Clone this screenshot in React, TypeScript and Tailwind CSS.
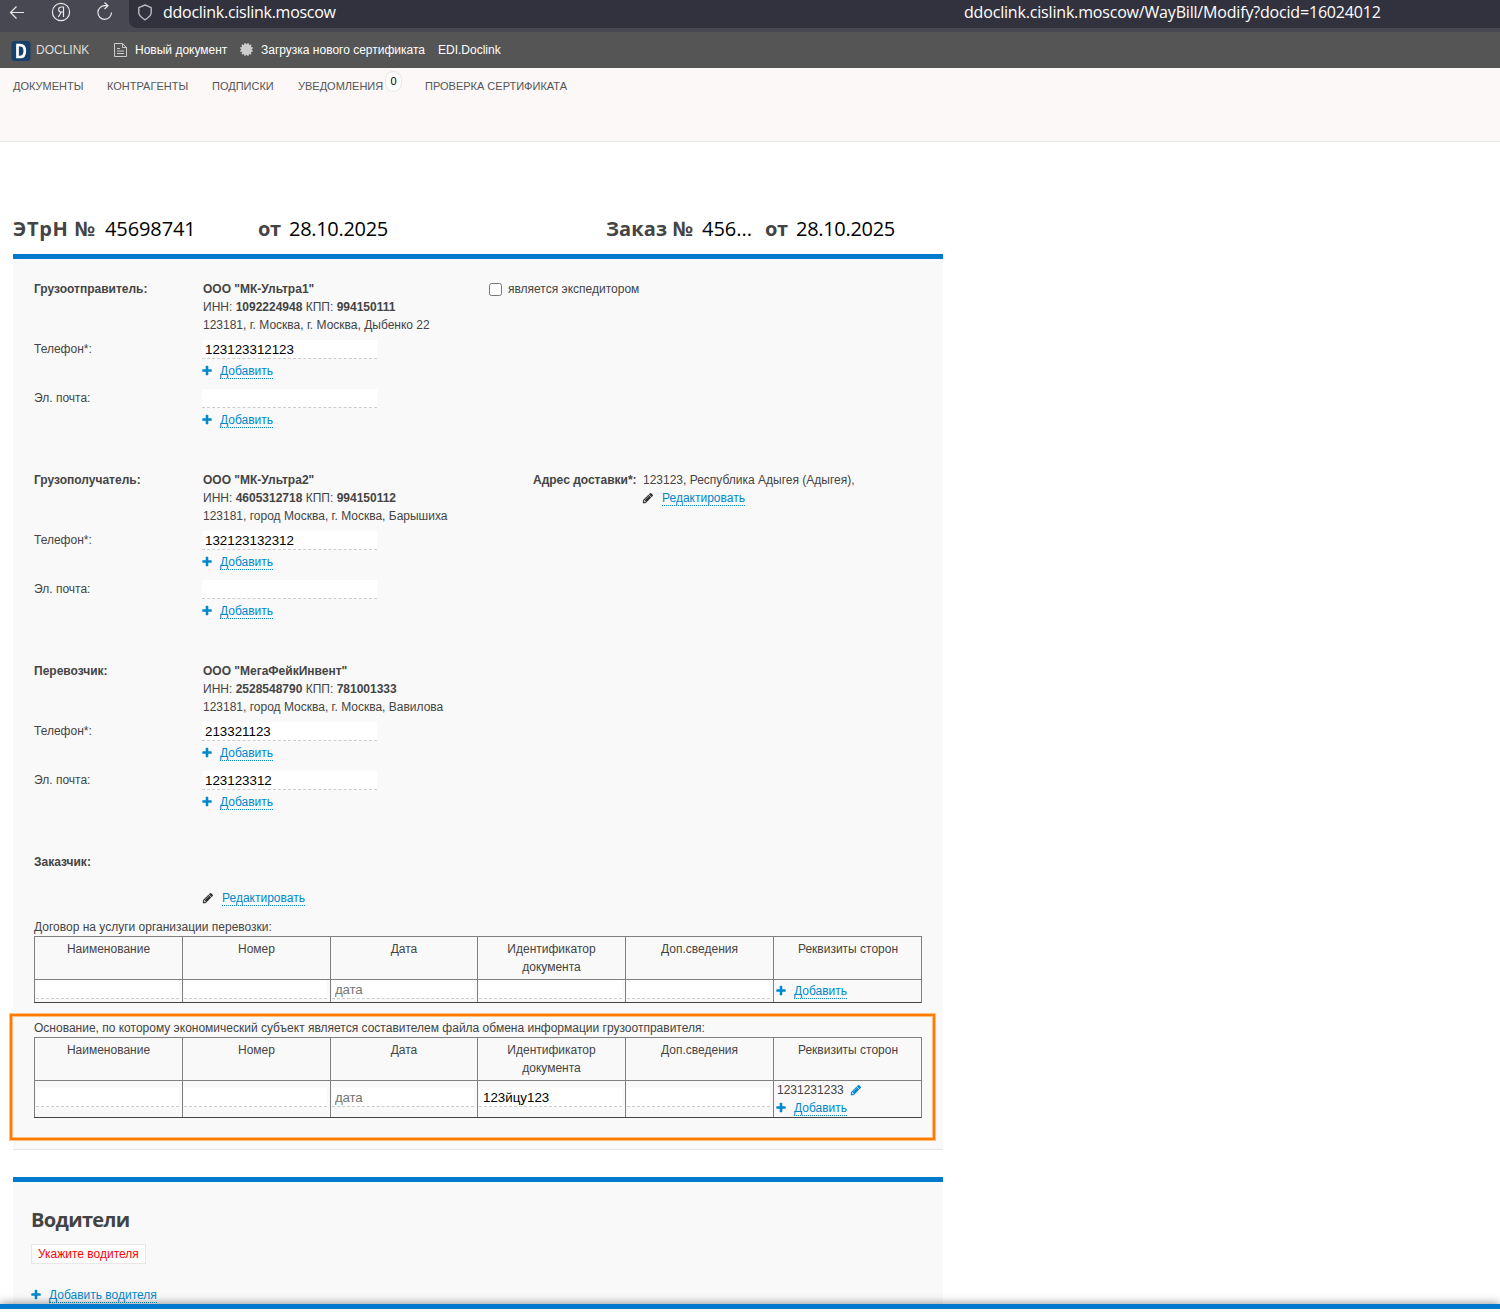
import type { ReactNode } from "react";
import { clsx } from "clsx";
import { FaCertificate } from "react-icons/fa";

type Party = {
  role: string;
  name: string;
  inn: string;
  kpp: string;
  address: string;
  phone: string;
  email: string;
  extra?: ReactNode;
};

const COLUMNS = [
  "Наименование",
  "Номер",
  "Дата",
  "Идентификатор документа",
  "Доп.сведения",
  "Реквизиты сторон"
];

const GRID = "grid grid-cols-[148px_148px_147px_148px_148px_149px]";

function PlusIcon() {
  return (
    <svg viewBox="0 0 1792 1792" fill="currentColor" className="mt-[3px] mr-[7px] -ml-px h-3 w-3 text-[#0088cc]">
      <path d="M1600 736v192q0 40-28 68t-68 28h-416v416q0 40-28 68t-68 28h-192q-40 0-68-28t-28-68v-416h-416q-40 0-68-28t-28-68v-192q0-40 28-68t68-28h416v-416q0-40 28-68t68-28h192q40 0 68 28t28 68v416h416q40 0 68 28t28 68z" />
    </svg>
  );
}

function PencilIcon({ className }: { className?: string }) {
  return (
    <svg viewBox="0 0 1792 1792" fill="currentColor" className={clsx("mt-[3px] h-3 w-3", className)}>
      <path d="M491 1536l91-91-235-235-91 91v107h128v128h107zm523-928q0-22-22-22-10 0-17 7l-542 542q-7 7-7 17 0 22 22 22 10 0 17-7l542-542q7-7 7-17zm-54-192l416 416-832 832h-416v-416zm683 96q0 53-37 90l-166 166-416-416 166-165q36-38 90-38 53 0 91 38l235 234q37 39 37 91z" />
    </svg>
  );
}

function DottedLink({ children }: { children: ReactNode }) {
  return (
    <a href="#" className="inline-block h-[17px] border-b border-dotted border-[#0088cc] leading-[18px] text-[#0088cc]">
      {children}
    </a>
  );
}

function AddLink({ label = "Добавить" }: { label?: string }) {
  return (
    <div className="flex h-[18px] items-start">
      <PlusIcon />
      <DottedLink>{label}</DottedLink>
    </div>
  );
}

function EditLink() {
  return (
    <div className="flex h-[18px] items-start">
      <PencilIcon className="mr-2 -ml-px text-[#333]" />
      <DottedLink>Редактировать</DottedLink>
    </div>
  );
}

function Field({ value, placeholder, className }: { value?: string; placeholder?: string; className?: string }) {
  return (
    <input
      defaultValue={value}
      placeholder={placeholder}
      className={clsx(
        "block h-[19px] border-b border-dashed border-[#ccc] bg-white text-[13.33px] leading-[18px] text-black outline-none placeholder:text-[#757575]",
        className
      )}
    />
  );
}

function PartyBlock({ party }: { party: Party }) {
  return (
    <section className="flex h-[191px]">
      <div className="w-[168px] shrink-0">
        <p className="h-[60px] font-bold">{party.role}:</p>
        <p className="h-[49px]">Телефон*:</p>
        <p>Эл. почта:</p>
      </div>
      <div className="w-[287px] shrink-0">
        <div className="h-[60px] pl-px whitespace-nowrap">
          <p className="font-bold">{party.name}</p>
          <p>
            ИНН: <b>{party.inn}</b> КПП: <b>{party.kpp}</b>
          </p>
          <p>{party.address}</p>
        </div>
        <div className="h-[49px]">
          <Field value={party.phone} className="mb-[3px] w-[175px] pl-[3px]" />
          <AddLink />
        </div>
        <Field value={party.email} className="mb-[3px] w-[175px] pl-[3px]" />
        <AddLink />
      </div>
      {party.extra}
    </section>
  );
}

function ContractTable({ docId, tall, children }: { docId?: string; tall?: boolean; children: ReactNode }) {
  const cell = clsx("border-l border-[#808080] pl-px", tall ? "pt-[7px]" : "pt-0");
  return (
    <div className="w-[888px] border-t border-r border-b border-t-[#808080] border-r-[#808080] border-b-[#444]">
      <div className={clsx(GRID, "h-[43px] border-b border-[#808080] text-center")}>
        {COLUMNS.map((title) => (
          <div key={title} className="border-l border-[#808080] px-5 pt-[3px] first:px-2 last:px-2">
            {title}
          </div>
        ))}
      </div>
      <div className={clsx(GRID, tall ? "h-[36px]" : "h-[22px]")}>
        <div className={cell}><Field className="w-[143px]" /></div>
        <div className={cell}><Field className="w-[143px]" /></div>
        <div className={cell}><Field placeholder="дата" className="w-[142px] pl-[3px] tracking-[-0.2px]" /></div>
        <div className={cell}><Field value={docId} className="w-[143px] pl-1" /></div>
        <div className={cell}><Field className="w-[143px]" /></div>
        <div className="border-l border-[#808080] pl-[2px]">{children}</div>
      </div>
    </div>
  );
}

const PARTIES: Party[] = [
  {
    role: "Грузоотправитель",
    name: 'ООО "МК-Ультра1"',
    inn: "1092224948",
    kpp: "994150111",
    address: "123181, г. Москва, г. Москва, Дыбенко 22",
    phone: "123123312123",
    email: "",
    extra: (
      <label className="flex h-[18px] items-start">
        <input
          type="checkbox"
          className="mt-[3px] mr-[6px] h-[13px] w-[13px] appearance-none rounded-[2.5px] border border-[#767676] bg-white"
        />
        является экспедитором
      </label>
    )
  },
  {
    role: "Грузополучатель",
    name: 'ООО "МК-Ультра2"',
    inn: "4605312718",
    kpp: "994150112",
    address: "123181, город Москва, г. Москва, Барышиха",
    phone: "132123132312",
    email: "",
    extra: (
      <div className="flex pl-11 whitespace-nowrap">
        <b className="w-[110px]">Адрес доставки*:</b>
        <div>
          <p>123123, Республика Адыгея (Адыгея),</p>
          <EditLink />
        </div>
      </div>
    )
  },
  {
    role: "Перевозчик",
    name: 'ООО "МегаФейкИнвент"',
    inn: "2528548790",
    kpp: "781001333",
    address: "123181, город Москва, г. Москва, Вавилова",
    phone: "213321123",
    email: "123123312"
  }
];

function BrowserBar() {
  return (
    <div className="flex h-8 bg-[#484852] font-['Open_Sans','Noto_Sans',sans-serif] text-base text-white">
      <div className="flex w-[129px] items-start">
        <svg width="129" height="28" fill="none" stroke="#e8e8ea" strokeWidth="1.2">
          <path d="M24 12.5H10.5M16.5 6.5l-6 6 6 6" />
          <circle cx="61" cy="12" r="8.6" />
          <path d="M63.5 17V7h-2.300c-3.400 0-3.400 5 0 5h2.300M61.300 12l-3 5" />
          <path d="M111.500 12.500a6.800 6.800 0 1 1-6.600-6.800h2.600M104.500 2.500l3.500 3.200-3.500 3.300" />
        </svg>
      </div>
      <div className="flex h-7 flex-1 rounded-bl-lg bg-[#32323e] leading-[25px]">
        <svg width="34" height="25" fill="none" stroke="#b9b9be" strokeWidth="1.4">
          <path d="M16 5l6.200 2.600v5.200c0 3-3 5-6.200 7-3.200-2-6.200-4-6.200-7V7.600z" strokeLinejoin="round" />
        </svg>
        <span className="w-[801px] tracking-[-0.27px]">ddoclink.cislink.moscow</span>
        <span className="tracking-[-0.18px]">ddoclink.cislink.moscow/WayBill/Modify?docid=16024012</span>
      </div>
    </div>
  );
}

function Toolbar() {
  return (
    <div className="flex h-9 items-center bg-[#555] pl-[11px] whitespace-nowrap text-white">
      <svg width="20" height="20" className="mt-[2px] mr-[5px]">
        <rect x=".5" width="19" height="20" rx="3" fill="#17406b" />
        <path d="M6.500 4.200h2.700c3.300 0 4.600 2.200 4.600 5.800s-1.300 6-4.600 6H6.500z" fill="none" stroke="#fff" strokeWidth="2.700" />
      </svg>
      <span className="w-[78px] text-[#ddd]">DOCLINK</span>
      <svg width="13" height="14" fill="none" stroke="#ccc" className="-mt-px mr-2">
        <path d="M.5.5h8l4 4v9H.5zM8.500.5v4h4M3 5.500h3M3 8h7M3 10.500h7" />
      </svg>
      <span className="w-[105px]">Новый документ</span>
      <FaCertificate className="-mt-px mr-2 h-[13px] w-[13px] text-[#ccc]" />
      <span className="w-[177px]">Загрузка нового сертификата</span>
      <span>EDI.Doclink</span>
    </div>
  );
}

function Nav() {
  return (
    <nav className="flex h-[74px] border-b border-[#e7e5e5] bg-[#fcf8f7] pt-[9px] pl-[13px] text-[11px] whitespace-nowrap text-[#555]">
      <span className="w-[94px]">ДОКУМЕНТЫ</span>
      <span className="w-[105px]">КОНТРАГЕНТЫ</span>
      <span className="w-[86px]">ПОДПИСКИ</span>
      <span className="relative w-[127px]">
        УВЕДОМЛЕНИЯ
        <span className="absolute -top-[6px] left-[87px] flex h-[21px] w-[17px] items-center justify-center rounded-full border border-[#e5e5e5] bg-white pb-[2px] text-black">
          0
        </span>
      </span>
      <span>ПРОВЕРКА СЕРТИФИКАТА</span>
    </nav>
  );
}

export default function App() {
  return (
    <div className="relative h-[1312px] w-[1500px] overflow-hidden bg-white font-['Liberation_Sans',Arial,sans-serif] text-[12px] leading-[18px] text-[#444]">
      <BrowserBar />
      <Toolbar />
      <Nav />

      <main className="ml-[13px] w-[930px]">
        <h1 className="flex h-28 items-start pt-[72px] font-['Open_Sans','Noto_Sans',sans-serif] text-[20px] leading-[30px] whitespace-nowrap text-black">
          <b className="w-[92px] tracking-[0.7px] text-[#444]">ЭТрН №</b>
          <span className="w-[153px] tracking-[-0.1px]">45698741</span>
          <b className="w-[31px] tracking-[-0.4px] text-[#444]">от</b>
          <span className="w-[317px] tracking-[-0.3px]">28.10.2025</span>
          <b className="w-[96px] tracking-[0.1px] text-[#444]">Заказ №</b>
          <span className="w-[63px]">456...</span>
          <b className="w-[31px] tracking-[-0.4px] text-[#444]">от</b>
          <span className="tracking-[-0.3px]">28.10.2025</span>
        </h1>

        <div className="h-[896px] border-t-[5px] border-b border-t-[#007acc] border-b-[#e5e5e5] bg-[#f9f9f9] pt-[21px] pl-[21px]">
          {PARTIES.map((party) => (
            <PartyBlock key={party.role} party={party} />
          ))}
          <p className="h-9 font-bold">Заказчик:</p>
          <div className="mb-[11px] pl-[169px]">
            <EditLink />
          </div>
          <p>Договор на услуги организации перевозки:</p>
          <ContractTable>
            <div className="pt-[2px]">
              <AddLink />
            </div>
          </ContractTable>

          <div className="mt-[11px] -ml-6 h-[126px] w-[925px] border-2 border-[#ff7a00] pt-[3px] pl-[22px] shadow-[0_0_0_1px_#ffbf80,inset_0_0_0_1px_#ffbf80]">
            <p>Основание, по которому экономический субъект является составителем файла обмена информации грузоотправителя:</p>
            <ContractTable docId="123йцу123" tall>
              <p className="flex pl-px">
                1231231233
                <PencilIcon className="ml-[6px] text-[#0088cc]" />
              </p>
              <AddLink />
            </ContractTable>
          </div>
        </div>

        <div className="mt-[27px] h-[200px] border-t-[5px] border-[#007acc] bg-[#f9f9f9] pt-[23px] pl-[18px]">
          <h2 className="h-[39px] font-['Open_Sans','Noto_Sans',sans-serif] text-[20px] leading-[30px] font-bold tracking-[-0.65px]">
            Водители
          </h2>
          <div className="mb-[22px] h-5 w-[115px] border border-[#e8e8e8] bg-white pl-[6px] whitespace-nowrap text-[#f00]">
            Укажите водителя
          </div>
          <AddLink label="Добавить водителя" />
        </div>
      </main>

      {/* sticky footer edge */}
      <div className="absolute inset-x-0 bottom-0 h-2 border-t-[5px] border-[#007acc] bg-[#f9f9f9] shadow-[0_0_10px_rgba(0,0,0,0.5)]" />
    </div>
  );
}
